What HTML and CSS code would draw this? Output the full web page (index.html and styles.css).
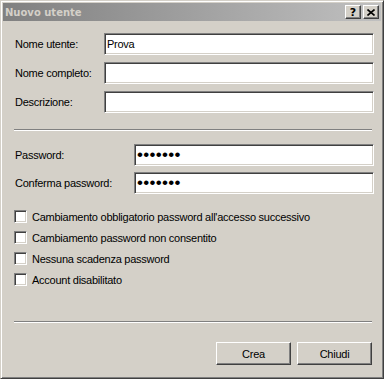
FILE: index.html
```html
<!DOCTYPE html>
<html lang="it">
<head>
  <meta charset="UTF-8">
  <title>Nuovo utente</title>
  <link rel="stylesheet" href="styles.css">
</head>
<body>
  <div class="dialog">
    <div class="caption">
      <div class="caption-title">Nuovo utente</div>
      <div class="caption-buttons">
        <button class="caption-btn help-btn">?</button>
        <button class="caption-btn close-btn">
          <svg width="8" height="7" viewBox="0 0 8 7">
            <path d="M0.5 0.5 L7.5 6.5 M7.5 0.5 L0.5 6.5" stroke="#000" stroke-width="1.6" fill="none"/>
          </svg>
        </button>
      </div>
    </div>

    <div class="content">
      <div class="group">
        <div class="field">
          <label class="label">Nome utente:</label>
          <input type="text" class="edit" value="Prova">
        </div>
        <div class="field">
          <label class="label">Nome completo:</label>
          <input type="text" class="edit">
        </div>
        <div class="field">
          <label class="label">Descrizione:</label>
          <input type="text" class="edit">
        </div>
      </div>

      <div class="separator sep-top"></div>

      <div class="group group-password">
        <div class="field">
          <label class="label">Password:</label>
          <input type="password" class="edit" value="prova12">
        </div>
        <div class="field">
          <label class="label">Conferma password:</label>
          <input type="password" class="edit" value="prova12">
        </div>
      </div>

      <div class="checks">
        <label class="check"><span class="box"></span>Cambiamento obbligatorio password all'accesso successivo</label>
        <label class="check"><span class="box"></span>Cambiamento password non consentito</label>
        <label class="check"><span class="box"></span>Nessuna scadenza password</label>
        <label class="check"><span class="box"></span>Account disabilitato</label>
      </div>

      <div class="separator sep-bottom"></div>

      <div class="actions">
        <button class="push">Crea</button>
        <button class="push">Chiudi</button>
      </div>
    </div>
  </div>
</body>
</html>
```

FILE: styles.css
```css
body, html {
  margin: 0;
  padding: 0;
  background: #d4d0c8;
}
.dialog {
  box-sizing: border-box;
  width: 384px;
  height: 379px;
  padding: 2px;
  background: #d4d0c8;
  border: 1px solid;
  border-color: #d4d0c8 #404040 #404040 #d4d0c8;
  box-shadow: inset 1px 1px #fff, inset -1px -1px #808080;
  font-family: "Liberation Sans", Arial, sans-serif;
  font-size: 11px;
  letter-spacing: -0.25px;
  color: #000;
}
.caption {
  height: 18px;
  display: flex;
  align-items: center;
  justify-content: space-between;
  background: linear-gradient(to right, #808080, #c0c0c0);
}
.caption-title {
  padding-left: 2px;
  font-family: "DejaVu Sans", sans-serif;
  font-weight: bold;
  font-size: 10px;
  letter-spacing: 0;
  color: #d4d0c8;
}
.caption-buttons {
  display: flex;
  padding-right: 2px;
}
.caption-btn {
  box-sizing: border-box;
  width: 16px;
  height: 14px;
  margin: 0;
  padding: 0;
  display: flex;
  align-items: center;
  justify-content: center;
  background: #d4d0c8;
  border: 1px solid;
  border-color: #fff #404040 #404040 #fff;
  box-shadow: inset -1px -1px #808080;
  font-family: "DejaVu Sans", sans-serif;
  font-weight: bold;
  font-size: 11px;
  line-height: 1;
  color: #000;
}
.help-btn {
  margin-right: 2px;
}
.content {
  display: flex;
  flex-direction: column;
  padding: 12px 7px 0 11px;
}
.field {
  display: flex;
  align-items: center;
  height: 22px;
}
.field + .field {
  margin-top: 7px;
}
.group-password .field + .field {
  margin-top: 6px;
}
.label {
  width: 89px;
  padding-left: 1px;
}
.group-password .label {
  width: 119px;
}
.edit {
  flex: 1;
  box-sizing: border-box;
  height: 22px;
  margin: 0;
  padding: 0 2px;
  background: #fff;
  border: 1px solid;
  border-color: #808080 #fff #fff #808080;
  box-shadow: inset 1px 1px #404040, inset -1px -1px #d4d0c8;
  font-family: "Liberation Sans", Arial, sans-serif;
  font-size: 11px;
  letter-spacing: -0.25px;
  color: #000;
  outline: none;
}
.edit[type="password"] {
  font-size: 17px;
  letter-spacing: 0.3px;
}
.separator {
  height: 0;
  margin-right: 2px;
  border-top: 1px solid #808080;
  border-bottom: 1px solid #fff;
}
.sep-top {
  margin-top: 16px;
  margin-bottom: 13px;
}
.checks {
  display: flex;
  flex-direction: column;
  gap: 8px;
  margin-top: 16px;
}
.check {
  display: flex;
  align-items: center;
  height: 13px;
}
.box {
  box-sizing: border-box;
  width: 13px;
  height: 13px;
  margin-right: 5px;
  background: #fff;
  border: 1px solid;
  border-color: #808080 #fff #fff #808080;
  box-shadow: inset 1px 1px #404040, inset -1px -1px #d4d0c8;
}
.sep-bottom {
  margin-top: 35px;
}
.actions {
  display: flex;
  justify-content: flex-end;
  gap: 6px;
  margin-top: 19px;
  margin-right: 2px;
}
.push {
  box-sizing: border-box;
  width: 75px;
  height: 23px;
  margin: 0;
  padding: 0;
  background: #d4d0c8;
  border: 1px solid;
  border-color: #fff #404040 #404040 #fff;
  box-shadow: inset -1px -1px #808080;
  font-family: "Liberation Sans", Arial, sans-serif;
  font-size: 11px;
  letter-spacing: -0.25px;
  color: #000;
}
```
